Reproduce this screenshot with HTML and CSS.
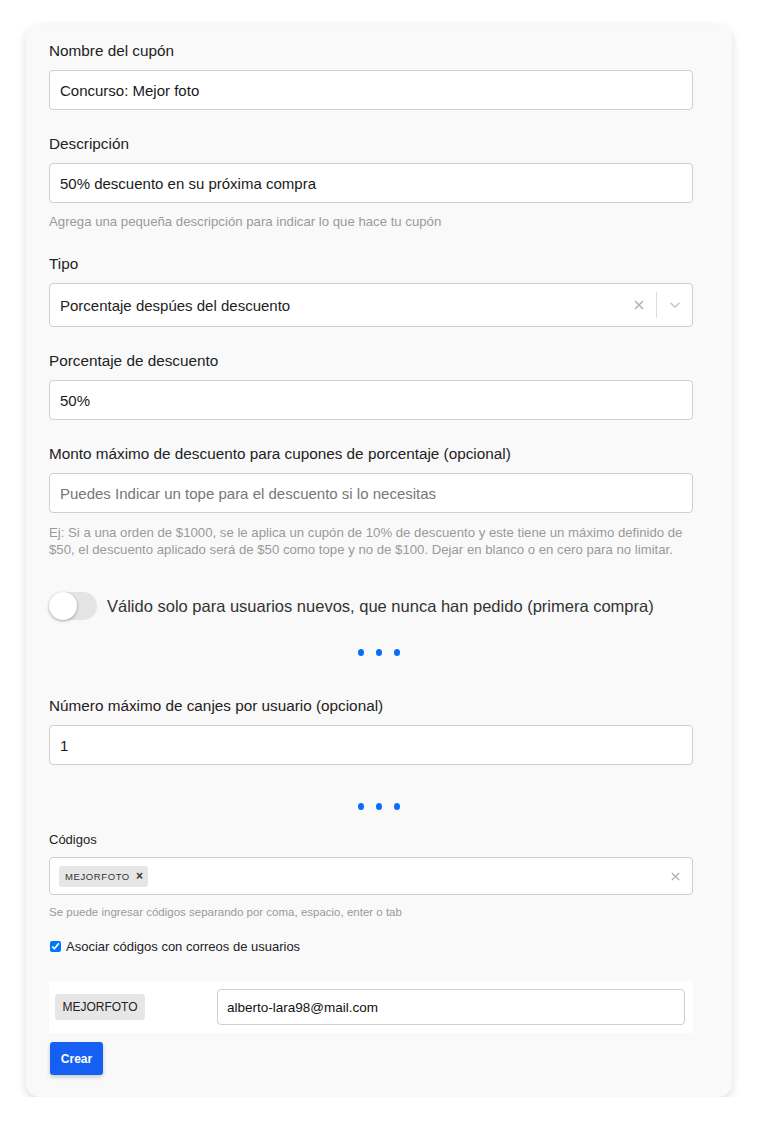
FILE: index.html
```html
<!DOCTYPE html>
<html lang="es">
<head>
<meta charset="utf-8">
<title>Cupón</title>
<link rel="stylesheet" href="styles.css">
</head>
<body>
<div class="card">
  <div class="group">
    <label class="label">Nombre del cupón</label>
    <div class="input">Concurso: Mejor foto</div>
  </div>
  <div class="group">
    <label class="label">Descripción</label>
    <div class="input">50% descuento en su próxima compra</div>
    <p class="help">Agrega una pequeña descripción para indicar lo que hace tu cupón</p>
  </div>
  <div class="group">
    <label class="label">Tipo</label>
    <div class="select">
      <span class="select-value">Porcentaje despúes del descuento</span>
      <span class="select-clear">
        <svg width="10" height="10" viewBox="0 0 10 10"><path d="M1 1L9 9M9 1L1 9" stroke="#b3b3b3" stroke-width="1.6" fill="none"/></svg>
      </span>
      <span class="select-sep"></span>
      <span class="select-arrow">
        <svg width="12" height="8" viewBox="0 0 12 8"><path d="M1.5 2L6 6L10.5 2" stroke="#c4c4c4" stroke-width="1.5" fill="none"/></svg>
      </span>
    </div>
  </div>
  <div class="group">
    <label class="label">Porcentaje de descuento</label>
    <div class="input">50%</div>
  </div>
  <div class="group">
    <label class="label">Monto máximo de descuento para cupones de porcentaje (opcional)</label>
    <div class="input placeholder">Puedes Indicar un tope para el descuento si lo necesitas</div>
    <p class="help help-multi">Ej: Si a una orden de $1000, se le aplica un cupón de 10% de descuento y este tiene un máximo definido de $50, el descuento aplicado será de $50 como tope y no de $100. Dejar en blanco o en cero para no limitar.</p>
  </div>
  <div class="toggle-row">
    <span class="toggle"><span class="knob"></span></span>
    <span class="toggle-text">Válido solo para usuarios nuevos, que nunca han pedido (primera compra)</span>
  </div>
  <div class="dots"><span></span><span></span><span></span></div>
  <div class="group">
    <label class="label">Número máximo de canjes por usuario (opcional)</label>
    <div class="input">1</div>
  </div>
  <div class="dots dots-2"><span></span><span></span><span></span></div>
  <div class="codes">
    <label class="label-sm">Códigos</label>
    <div class="tags-input">
      <span class="chip">MEJORFOTO <b class="chip-x">×</b></span>
      <span class="tags-clear">
        <svg width="9" height="9" viewBox="0 0 10 10"><path d="M1 1L9 9M9 1L1 9" stroke="#b3b3b3" stroke-width="1.5" fill="none"/></svg>
      </span>
    </div>
    <p class="help-sm">Se puede ingresar códigos separando por coma, espacio, enter o tab</p>
  </div>
  <label class="check-row"><input type="checkbox" checked> <span>Asociar códigos con correos de usuarios</span></label>
  <div class="assoc-row">
    <span class="code-tag">MEJORFOTO</span>
    <div class="email-input">alberto-lara98@mail.com</div>
  </div>
  <button class="btn">Crear</button>
</div>
</body>
</html>
```

FILE: styles.css
```css
* { box-sizing: border-box; }
body {
  margin: 0;
  background: #fff;
  font-family: "Liberation Sans", Arial, sans-serif;
  color: #222;
}
.card {
  margin: 25px 0 0 26px;
  width: 706px;
  height: 1072px;
  background: #f9f9f9;
  border-radius: 14px;
  box-shadow: 0 3px 10px rgba(0,0,0,0.14);
  padding: 15px 39px 0 23px;
  display: flex;
  flex-direction: column;
}
.group { display: flex; flex-direction: column; margin-bottom: 23px; }
.label {
  font-size: 15.3px;
  line-height: 22px;
  color: #222;
  margin-bottom: 8px;
}
.input {
  height: 40px;
  background: #fff;
  border: 1px solid #cfcfcf;
  border-radius: 4px;
  padding: 0 10px;
  display: flex;
  align-items: center;
  font-size: 15px;
  color: #1a1a1a;
}
.input.placeholder { color: #777; }
.help {
  margin: 10px 0 0;
  font-size: 13.2px;
  line-height: 17px;
  color: #9a9a9a;
}
.help-multi { margin-top: 11px; }
.select {
  height: 44px;
  background: #fff;
  border: 1px solid #cfcfcf;
  border-radius: 4px;
  display: flex;
  align-items: center;
  padding-left: 10px;
  font-size: 15px;
  color: #222;
}
.select-value { flex: 1; }
.select-clear { width: 18px; display: flex; justify-content: center; margin-right: 8px; }
.select-sep { width: 1px; height: 26px; background: #ddd; }
.select-arrow { width: 35px; display: flex; justify-content: center; }
.toggle-row {
  display: flex;
  align-items: center;
  gap: 10px;
  margin-top: 11px;
}
.toggle {
  width: 48px;
  height: 28px;
  border-radius: 14px;
  background: #e4e4e4;
  display: flex;
  align-items: center;
}
.knob {
  width: 28px;
  height: 28px;
  border-radius: 50%;
  background: #fff;
  box-shadow: 0 1px 3px rgba(0,0,0,0.35);
}
.toggle-text { font-size: 16.5px; color: #333; }
.dots {
  display: flex;
  justify-content: center;
  gap: 12px;
  margin: 29px -16px 39px 0;
}
.dots span {
  width: 6px;
  height: 7px;
  border-radius: 50%;
  background: #0a6cff;
}
.dots-2 { margin: 15px -16px 21px 0; }
.codes { display: flex; flex-direction: column; }
.label-sm { font-size: 13px; line-height: 18px; color: #222; margin-bottom: 8px; }
.tags-input {
  height: 38px;
  background: #fff;
  border: 1px solid #cfcfcf;
  border-radius: 4px;
  display: flex;
  align-items: center;
  padding: 0 10px 0 9px;
}
.chip {
  background: #e6e6e6;
  border-radius: 3px;
  font-size: 9.5px;
  letter-spacing: 0.6px;
  color: #333;
  padding: 3px 5px 3px 6px;
  line-height: 14px;
}
.chip-x { font-size: 12px; margin-left: 3px; letter-spacing: 0; }
.tags-clear { margin-left: auto; display: flex; padding-right: 2px; }
.help-sm { margin: 10px 0 0; font-size: 11.5px; line-height: 14px; color: #9a9a9a; }
.check-row {
  display: flex;
  align-items: center;
  gap: 5px;
  margin-top: 20px;
  font-size: 13px;
  color: #222;
}
.check-row input { margin: 0 0 0 1px; width: 11px; height: 11px; }
.assoc-row {
  margin-top: 27px;
  height: 52px;
  background: #fff;
  display: flex;
  align-items: center;
  padding: 0 8px 0 6px;
}
.code-tag {
  width: 90px;
  height: 26px;
  background: #e6e6e6;
  border-radius: 3px;
  font-size: 12px;
  display: flex;
  align-items: center;
  justify-content: center;
  color: #222;
}
.email-input {
  margin-left: 72px;
  flex: 1;
  height: 36px;
  border: 1px solid #cfcfcf;
  border-radius: 4px;
  display: flex;
  align-items: center;
  padding: 0 9px;
  font-size: 13.5px;
  color: #111;
}
.btn {
  margin-top: 9px;
  align-self: flex-start;
  margin-left: 1px;
  width: 53px;
  height: 33px;
  border: none;
  border-radius: 3px;
  background: #1560f2;
  color: #fff;
  font-family: inherit;
  font-weight: bold;
  font-size: 12px;
  box-shadow: 0 2px 4px rgba(0,0,0,0.2);
}
```
